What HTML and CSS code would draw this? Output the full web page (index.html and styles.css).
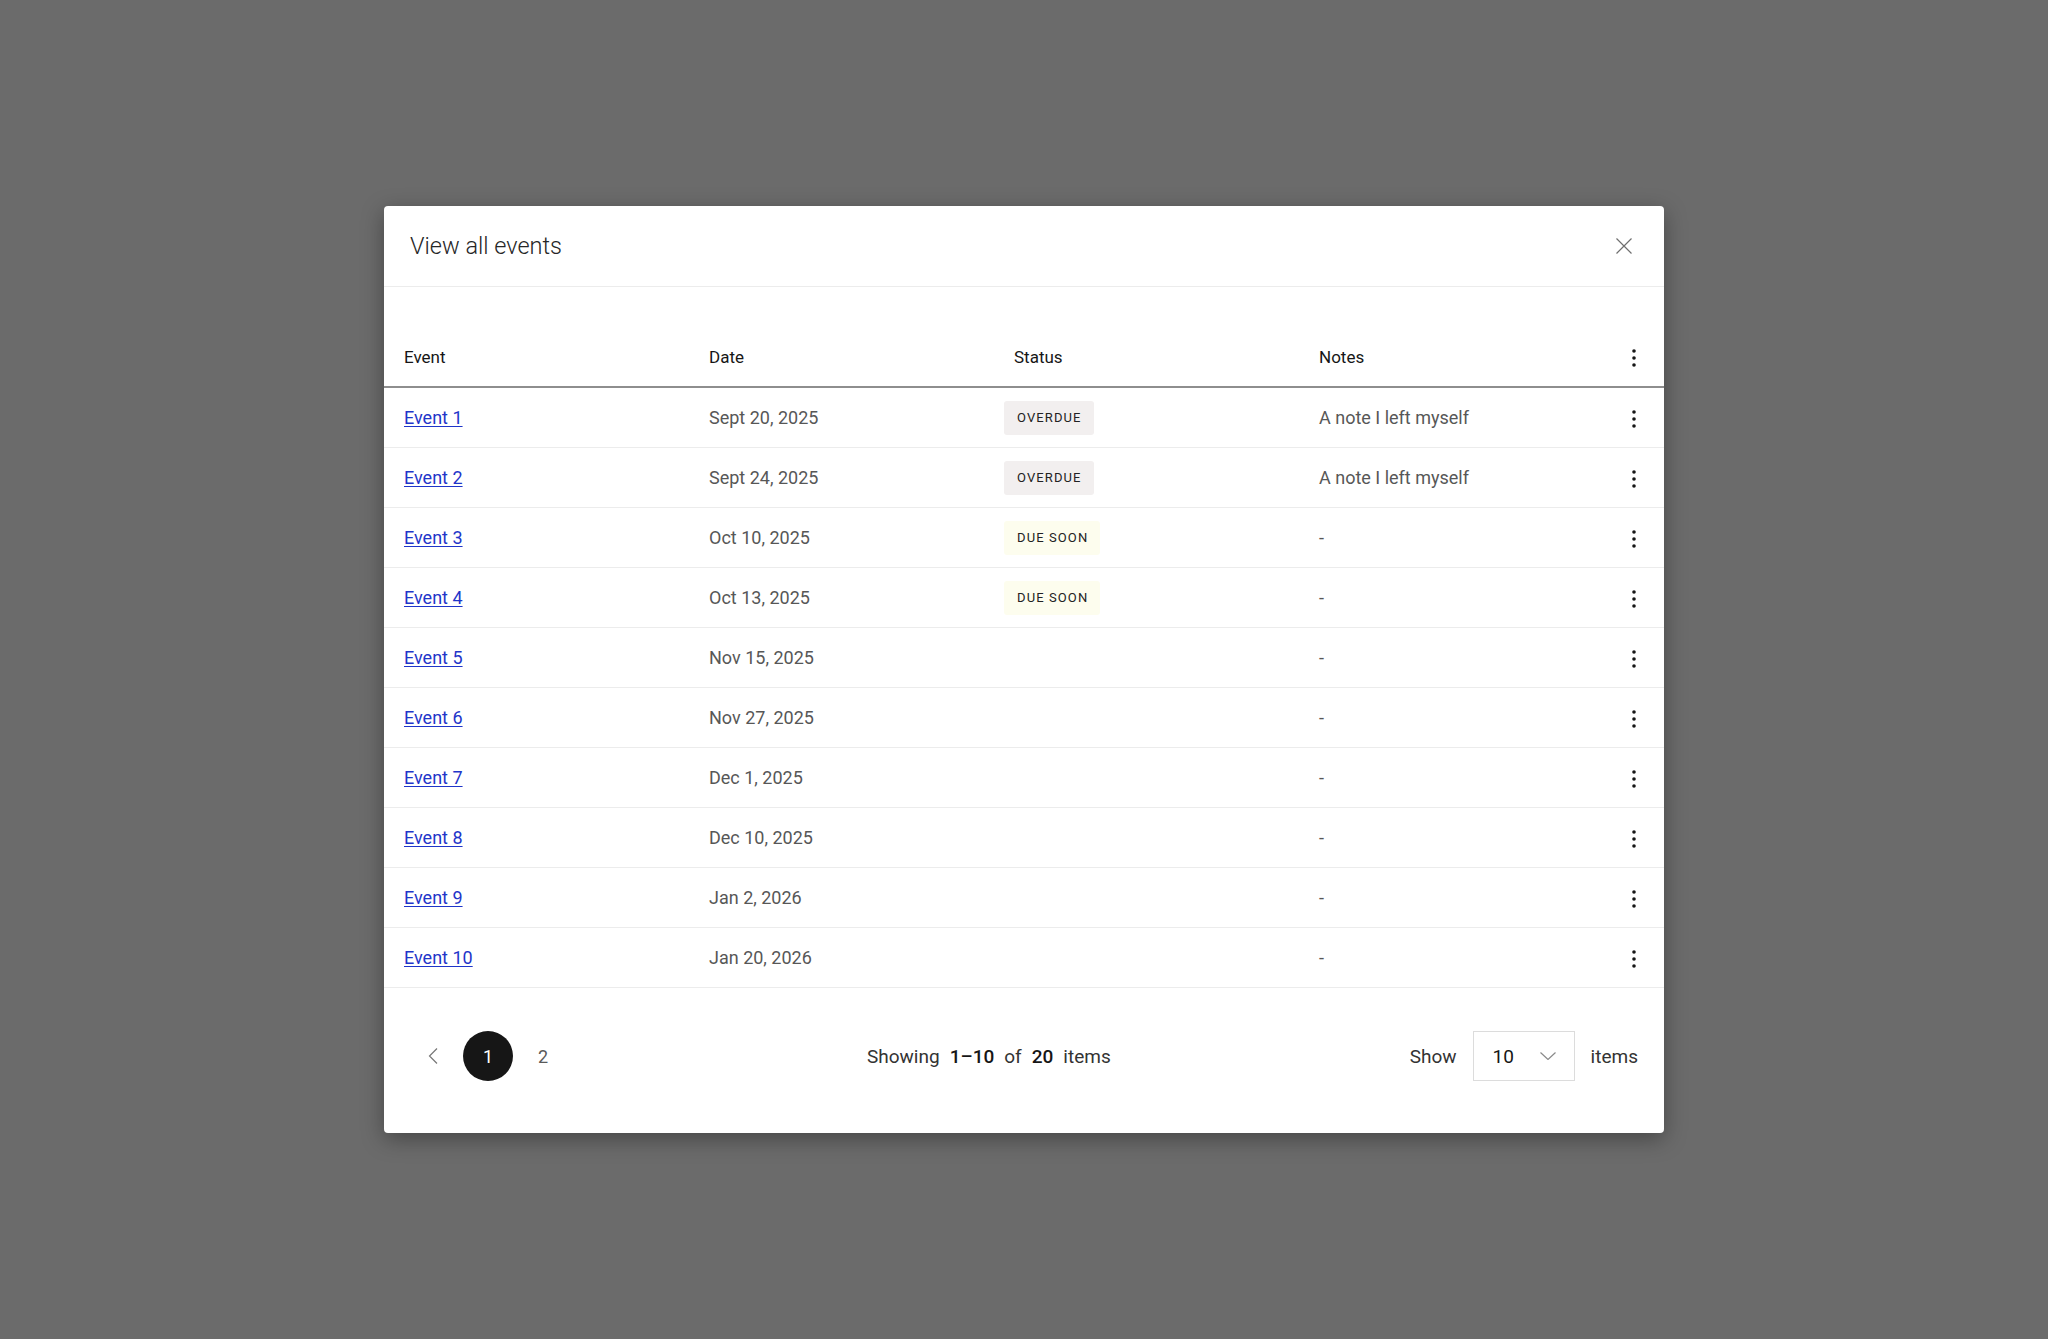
FILE: index.html
```html
<!DOCTYPE html>
<html lang="en">
<head>
<meta charset="utf-8">
<title>View all events</title>
<link rel="stylesheet" href="styles.css">
</head>
<body>
<div class="overlay">
  <div class="modal">
    <div class="modal-header">
      <h2 class="modal-title">View all events</h2>
      <button class="close-btn" aria-label="Close">
        <svg width="16" height="16" viewBox="0 0 16 16"><path d="M0.5 0.5L15.5 15.5M15.5 0.5L0.5 15.5" stroke="#6f6f6f" stroke-width="1.2" fill="none"/></svg>
      </button>
    </div>
    <div class="modal-body">
      <table class="events">
        <colgroup>
          <col class="col-main"><col class="col-main"><col class="col-main"><col class="col-main"><col class="col-kebab">
        </colgroup>
        <thead>
          <tr>
            <th>Event</th>
            <th>Date</th>
            <th>Status</th>
            <th>Notes</th>
            <th class="kebab-cell"><svg class="kebab" width="4" height="18" viewBox="0 0 4 18"><circle cx="2" cy="2" r="1.8"/><circle cx="2" cy="9" r="1.8"/><circle cx="2" cy="16" r="1.8"/></svg></th>
          </tr>
        </thead>
        <tbody>
          <tr><td><a href="#">Event 1</a></td><td>Sept 20, 2025</td><td><span class="badge badge-overdue">OVERDUE</span></td><td>A note I left myself</td><td class="kebab-cell"><svg class="kebab" width="4" height="18" viewBox="0 0 4 18"><circle cx="2" cy="2" r="1.8"/><circle cx="2" cy="9" r="1.8"/><circle cx="2" cy="16" r="1.8"/></svg></td></tr>
          <tr><td><a href="#">Event 2</a></td><td>Sept 24, 2025</td><td><span class="badge badge-overdue">OVERDUE</span></td><td>A note I left myself</td><td class="kebab-cell"><svg class="kebab" width="4" height="18" viewBox="0 0 4 18"><circle cx="2" cy="2" r="1.8"/><circle cx="2" cy="9" r="1.8"/><circle cx="2" cy="16" r="1.8"/></svg></td></tr>
          <tr><td><a href="#">Event 3</a></td><td>Oct 10, 2025</td><td><span class="badge badge-soon">DUE SOON</span></td><td>-</td><td class="kebab-cell"><svg class="kebab" width="4" height="18" viewBox="0 0 4 18"><circle cx="2" cy="2" r="1.8"/><circle cx="2" cy="9" r="1.8"/><circle cx="2" cy="16" r="1.8"/></svg></td></tr>
          <tr><td><a href="#">Event 4</a></td><td>Oct 13, 2025</td><td><span class="badge badge-soon">DUE SOON</span></td><td>-</td><td class="kebab-cell"><svg class="kebab" width="4" height="18" viewBox="0 0 4 18"><circle cx="2" cy="2" r="1.8"/><circle cx="2" cy="9" r="1.8"/><circle cx="2" cy="16" r="1.8"/></svg></td></tr>
          <tr><td><a href="#">Event 5</a></td><td>Nov 15, 2025</td><td></td><td>-</td><td class="kebab-cell"><svg class="kebab" width="4" height="18" viewBox="0 0 4 18"><circle cx="2" cy="2" r="1.8"/><circle cx="2" cy="9" r="1.8"/><circle cx="2" cy="16" r="1.8"/></svg></td></tr>
          <tr><td><a href="#">Event 6</a></td><td>Nov 27, 2025</td><td></td><td>-</td><td class="kebab-cell"><svg class="kebab" width="4" height="18" viewBox="0 0 4 18"><circle cx="2" cy="2" r="1.8"/><circle cx="2" cy="9" r="1.8"/><circle cx="2" cy="16" r="1.8"/></svg></td></tr>
          <tr><td><a href="#">Event 7</a></td><td>Dec 1, 2025</td><td></td><td>-</td><td class="kebab-cell"><svg class="kebab" width="4" height="18" viewBox="0 0 4 18"><circle cx="2" cy="2" r="1.8"/><circle cx="2" cy="9" r="1.8"/><circle cx="2" cy="16" r="1.8"/></svg></td></tr>
          <tr><td><a href="#">Event 8</a></td><td>Dec 10, 2025</td><td></td><td>-</td><td class="kebab-cell"><svg class="kebab" width="4" height="18" viewBox="0 0 4 18"><circle cx="2" cy="2" r="1.8"/><circle cx="2" cy="9" r="1.8"/><circle cx="2" cy="16" r="1.8"/></svg></td></tr>
          <tr><td><a href="#">Event 9</a></td><td>Jan 2, 2026</td><td></td><td>-</td><td class="kebab-cell"><svg class="kebab" width="4" height="18" viewBox="0 0 4 18"><circle cx="2" cy="2" r="1.8"/><circle cx="2" cy="9" r="1.8"/><circle cx="2" cy="16" r="1.8"/></svg></td></tr>
          <tr><td><a href="#">Event 10</a></td><td>Jan 20, 2026</td><td></td><td>-</td><td class="kebab-cell"><svg class="kebab" width="4" height="18" viewBox="0 0 4 18"><circle cx="2" cy="2" r="1.8"/><circle cx="2" cy="9" r="1.8"/><circle cx="2" cy="16" r="1.8"/></svg></td></tr>
        </tbody>
      </table>
    </div>
    <div class="modal-footer">
      <div class="pager">
        <button class="page-btn prev" aria-label="Previous page">
          <svg width="10" height="16" viewBox="0 0 10 16"><path d="M9 0.5L1.5 8L9 15.5" stroke="#777" stroke-width="1.2" fill="none"/></svg>
        </button>
        <button class="page-btn active">1</button>
        <button class="page-btn">2</button>
      </div>
      <div class="showing">
        <span>Showing</span><strong>1–10</strong><span>of</span><strong>20</strong><span>items</span>
      </div>
      <div class="page-size">
        <span>Show</span>
        <div class="select">
          <span class="select-value">10</span>
          <svg width="16" height="8" viewBox="0 0 16 8"><path d="M0.5 0.5L8 7.5L15.5 0.5" stroke="#8a8a8a" stroke-width="1.2" fill="none"/></svg>
        </div>
        <span>items</span>
      </div>
    </div>
  </div>
</div>
</body>
</html>
```

FILE: styles.css
```css
html, body {
  margin: 0;
  padding: 0;
}

body {
  background: #6b6b6b;
  font-family: Roboto, "Liberation Sans", Arial, sans-serif;
  color: #161616;
}

.overlay {
  min-height: 100vh;
  display: flex;
  align-items: center;
  justify-content: center;
}

.modal {
  width: 1280px;
  background: #ffffff;
  border-radius: 4px;
  box-shadow: 0 6px 22px rgba(0, 0, 0, 0.35);
}

.modal-header {
  height: 80px;
  display: flex;
  align-items: center;
  justify-content: space-between;
  padding: 0 32px 0 26px;
  border-bottom: 1px solid #ececec;
}

.modal-title {
  margin: 0;
  font-size: 23.5px;
  font-weight: 300;
  color: #262626;
}

.close-btn {
  border: none;
  background: none;
  padding: 0;
  width: 16px;
  height: 16px;
  display: flex;
  cursor: pointer;
}

.modal-body {
  padding-top: 40px;
}

.events {
  width: 100%;
  table-layout: fixed;
  border-collapse: separate;
  border-spacing: 0;
}

.col-main {
  width: 305px;
}

.col-kebab {
  width: 60px;
}

.events th {
  height: 59px;
  padding: 0 20px;
  text-align: left;
  font-size: 17px;
  font-weight: 400;
  color: #161616;
  border-bottom: 2px solid #8e8e8e;
  vertical-align: middle;
}

.events td {
  height: 59px;
  padding: 0 20px;
  font-size: 18px;
  color: #575757;
  border-bottom: 1px solid #ececec;
  vertical-align: middle;
  white-space: nowrap;
}

.events .kebab-cell {
  padding: 0;
  text-align: center;
}

.kebab {
  display: inline-block;
  vertical-align: middle;
  fill: #161616;
}

.events a {
  color: #1f35c9;
  text-decoration: underline;
  text-underline-offset: 2px;
}

.badge {
  display: inline-flex;
  align-items: center;
  height: 34px;
  padding: 0 12px 0 13px;
  margin-left: -10px;
  border-radius: 3px;
  font-size: 13px;
  font-weight: 400;
  letter-spacing: 1.1px;
  color: #222222;
  box-sizing: border-box;
}

.badge-overdue {
  background: #f2efef;
}

.badge-soon {
  background: #fdfdee;
}

.modal-footer {
  display: flex;
  align-items: center;
  justify-content: space-between;
  padding: 43px 26px 52px 24px;
}

.pager {
  display: flex;
  align-items: center;
  gap: 5px;
}

.page-btn {
  width: 50px;
  height: 50px;
  border: none;
  border-radius: 50%;
  background: none;
  padding: 0;
  display: flex;
  align-items: center;
  justify-content: center;
  font-family: inherit;
  font-size: 18px;
  color: #5a5a5a;
  cursor: pointer;
}

.page-btn.active {
  background: #161616;
  color: #ffffff;
}

.showing {
  display: flex;
  align-items: baseline;
  gap: 10px;
  font-size: 19px;
  color: #333333;
}

.showing strong {
  font-weight: 500;
  color: #161616;
}

.page-size {
  display: flex;
  align-items: center;
  gap: 16px;
  font-size: 19px;
  color: #333333;
}

.select {
  width: 102px;
  height: 50px;
  box-sizing: border-box;
  border: 1px solid #dcdcdc;
  display: flex;
  align-items: center;
  justify-content: space-between;
  padding: 0 18px 0 19px;
}

.select-value {
  color: #161616;
}
```
